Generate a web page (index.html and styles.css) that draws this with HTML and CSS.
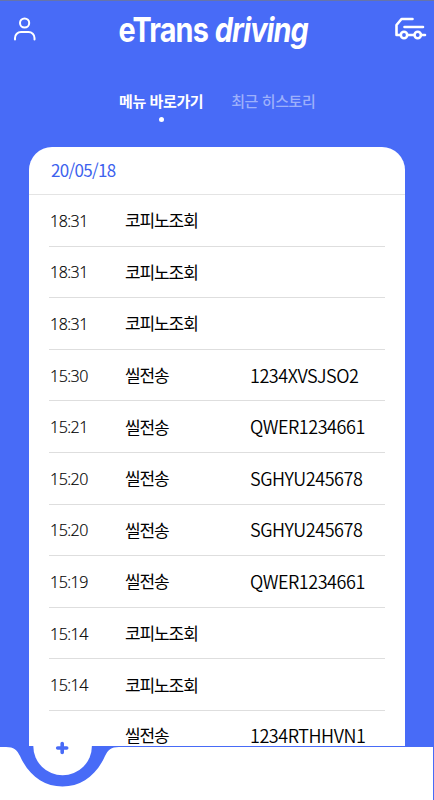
FILE: index.html
```html
<!DOCTYPE html>
<html lang="ko">
<head>
  <meta charset="UTF-8">
  <meta name="viewport" content="width=device-width, initial-scale=1.0">
  <title>eTrans driving</title>
  <link rel="stylesheet" href="styles.css">
</head>
<body>

  <div class="app">
    <header class="header">
      <svg class="icon-user" width="24" height="24" viewBox="0 0 24 24">
        <circle cx="11.6" cy="6" r="4.6" />
        <path d="M2 22.5v-1.5a6 6 0 0 1 6-6h7.5a6 6 0 0 1 6 6V22.5" />
      </svg>
      <h1 class="logo"><span class="logo-main">eTrans</span><span class="logo-sub">driving</span></h1>
      <svg class="icon-truck" width="32" height="24" viewBox="0 0 32 24">
        <path d="M17.5 2H6.5L1.5 8V18H5M9.5 10H28M13 18H18.5M26.5 18H30" />
        <circle cx="9" cy="18" r="3.2" />
        <circle cx="22.7" cy="18" r="3.2" />
      </svg>
    </header>

    <nav class="tabs">
      <a class="tab active">메뉴 바로가기</a>
      <a class="tab">최근 히스토리</a>
    </nav>

    <main class="card">
      <h2 class="date">20/05/18</h2>
      <ul class="list">
        <li class="row"><span class="time">18:31</span><span class="name">코피노조회</span></li>
        <li class="row"><span class="time">18:31</span><span class="name">코피노조회</span></li>
        <li class="row"><span class="time">18:31</span><span class="name">코피노조회</span></li>
        <li class="row"><span class="time">15:30</span><span class="name">씰전송</span><span class="code">1234XVSJSO2</span></li>
        <li class="row"><span class="time">15:21</span><span class="name">씰전송</span><span class="code">QWER1234661</span></li>
        <li class="row"><span class="time">15:20</span><span class="name">씰전송</span><span class="code">SGHYU245678</span></li>
        <li class="row"><span class="time">15:20</span><span class="name">씰전송</span><span class="code">SGHYU245678</span></li>
        <li class="row"><span class="time">15:19</span><span class="name">씰전송</span><span class="code">QWER1234661</span></li>
        <li class="row"><span class="time">15:14</span><span class="name">코피노조회</span></li>
        <li class="row"><span class="time">15:14</span><span class="name">코피노조회</span></li>
        <li class="row last"><span class="time"></span><span class="name">씰전송</span><span class="code">1234RTHHVN1</span></li>
      </ul>
    </main>

    <footer class="bottom">
      <svg class="add" width="130" height="54" viewBox="0 0 130 54">
        <path class="add-notch" d="M6 8C14 8 17 11 20 17C29 37 44 47.5 62.5 47.5S96 37 105 17C108 11 111 8 119 8Z" />
        <path class="add-circle" d="M33.3 0V7A29.3 29.3 0 0 0 91.9 7V0Z" />
        <path class="add-plus" d="M62.2 4.5V13.5M57.7 9H66.7" />
      </svg>
    </footer>
  </div>

</body>
</html>
```
FILE: styles.css
```css
* {
  box-sizing: border-box;
}
body {
  margin: 0;
  font-family: "Noto Sans CJK KR", sans-serif;
  background: #486bf7;
}
.app {
  display: flex;
  flex-direction: column;
  height: 800px;
  overflow: hidden;
  border-top: 1px solid #6674aa;
}
.header {
  display: flex;
  justify-content: space-between;
  align-items: center;
  flex: none;
  height: 56px;
  padding: 0 7px 0 13px;
}
.header svg {
  fill: none;
  stroke: #fff;
  stroke-width: 2;
  stroke-linecap: round;
  stroke-linejoin: round;
}
.header .icon-truck {
  stroke-width: 2.6;
}
.logo {
  display: flex;
  gap: 8px;
  margin: 2px 6px 0 0;
  font-family: Inter, sans-serif;
  font-size: 33.5px;
  font-weight: 700;
  line-height: 56px;
  letter-spacing: -1px;
  color: #fff;
  transform: scaleX(0.86);
}
.logo-sub {
  font-style: italic;
}
.tabs {
  display: flex;
  flex: none;
  gap: 28px;
  height: 90px;
  padding: 32px 0 0 119px;
}
.tab {
  display: flex;
  flex-direction: column;
  align-items: center;
  font-size: 15px;
  font-weight: 500;
  line-height: 24px;
  letter-spacing: -0.4px;
  color: #9db0fb;
}
.tab.active {
  font-weight: 700;
  color: #fff;
}
.tab.active::after {
  content: "";
  width: 5px;
  height: 5px;
  margin-top: 4px;
  border-radius: 50%;
  background: #fff;
}
.card {
  flex: none;
  height: 599px;
  margin: 0 29px;
  overflow: hidden;
  border-radius: 23px 23px 0 0;
  background: #fff;
}
.date {
  height: 48px;
  margin: 0;
  padding-left: 22px;
  border-bottom: 1px solid #e4e4e4;
  font-size: 17px;
  font-weight: 400;
  line-height: 46px;
  letter-spacing: -0.7px;
  color: #3d62ee;
}
.list {
  margin: 0;
  padding: 0 20px;
  list-style: none;
}
.row {
  display: grid;
  grid-template-columns: 75px 125px 1fr;
  align-items: center;
  height: 51.6px;
  padding-left: 1px;
  border-bottom: 1px solid #dedede;
  font-size: 17px;
  line-height: 18px;
  color: #000;
}
.row.last {
  height: 48.5px;
  border-bottom: none;
}
.time {
  padding-top: 1px;
  font-family: "Open Sans", sans-serif;
  font-size: 16px;
  font-weight: 300;
  letter-spacing: -0.5px;
  -webkit-text-stroke: 0.2px #000;
}
.name {
  letter-spacing: -1.1px;
}
.code {
  padding-bottom: 1px;
  font-size: 18px;
  font-weight: 350;
  letter-spacing: -0.45px;
}
.bottom {
  position: relative;
  flex: none;
  height: 54px;
  margin: 1px 1px 0 0;
  background: #fff;
}
/* sits over the card's lower edge */
.add {
  position: absolute;
  left: 0;
  top: -8px;
}
.add-notch {
  fill: #486bf7;
}
.add-circle {
  fill: #fff;
}
.add-plus {
  fill: none;
  stroke: #486bf7;
  stroke-width: 3.6;
  stroke-linecap: round;
}
```
